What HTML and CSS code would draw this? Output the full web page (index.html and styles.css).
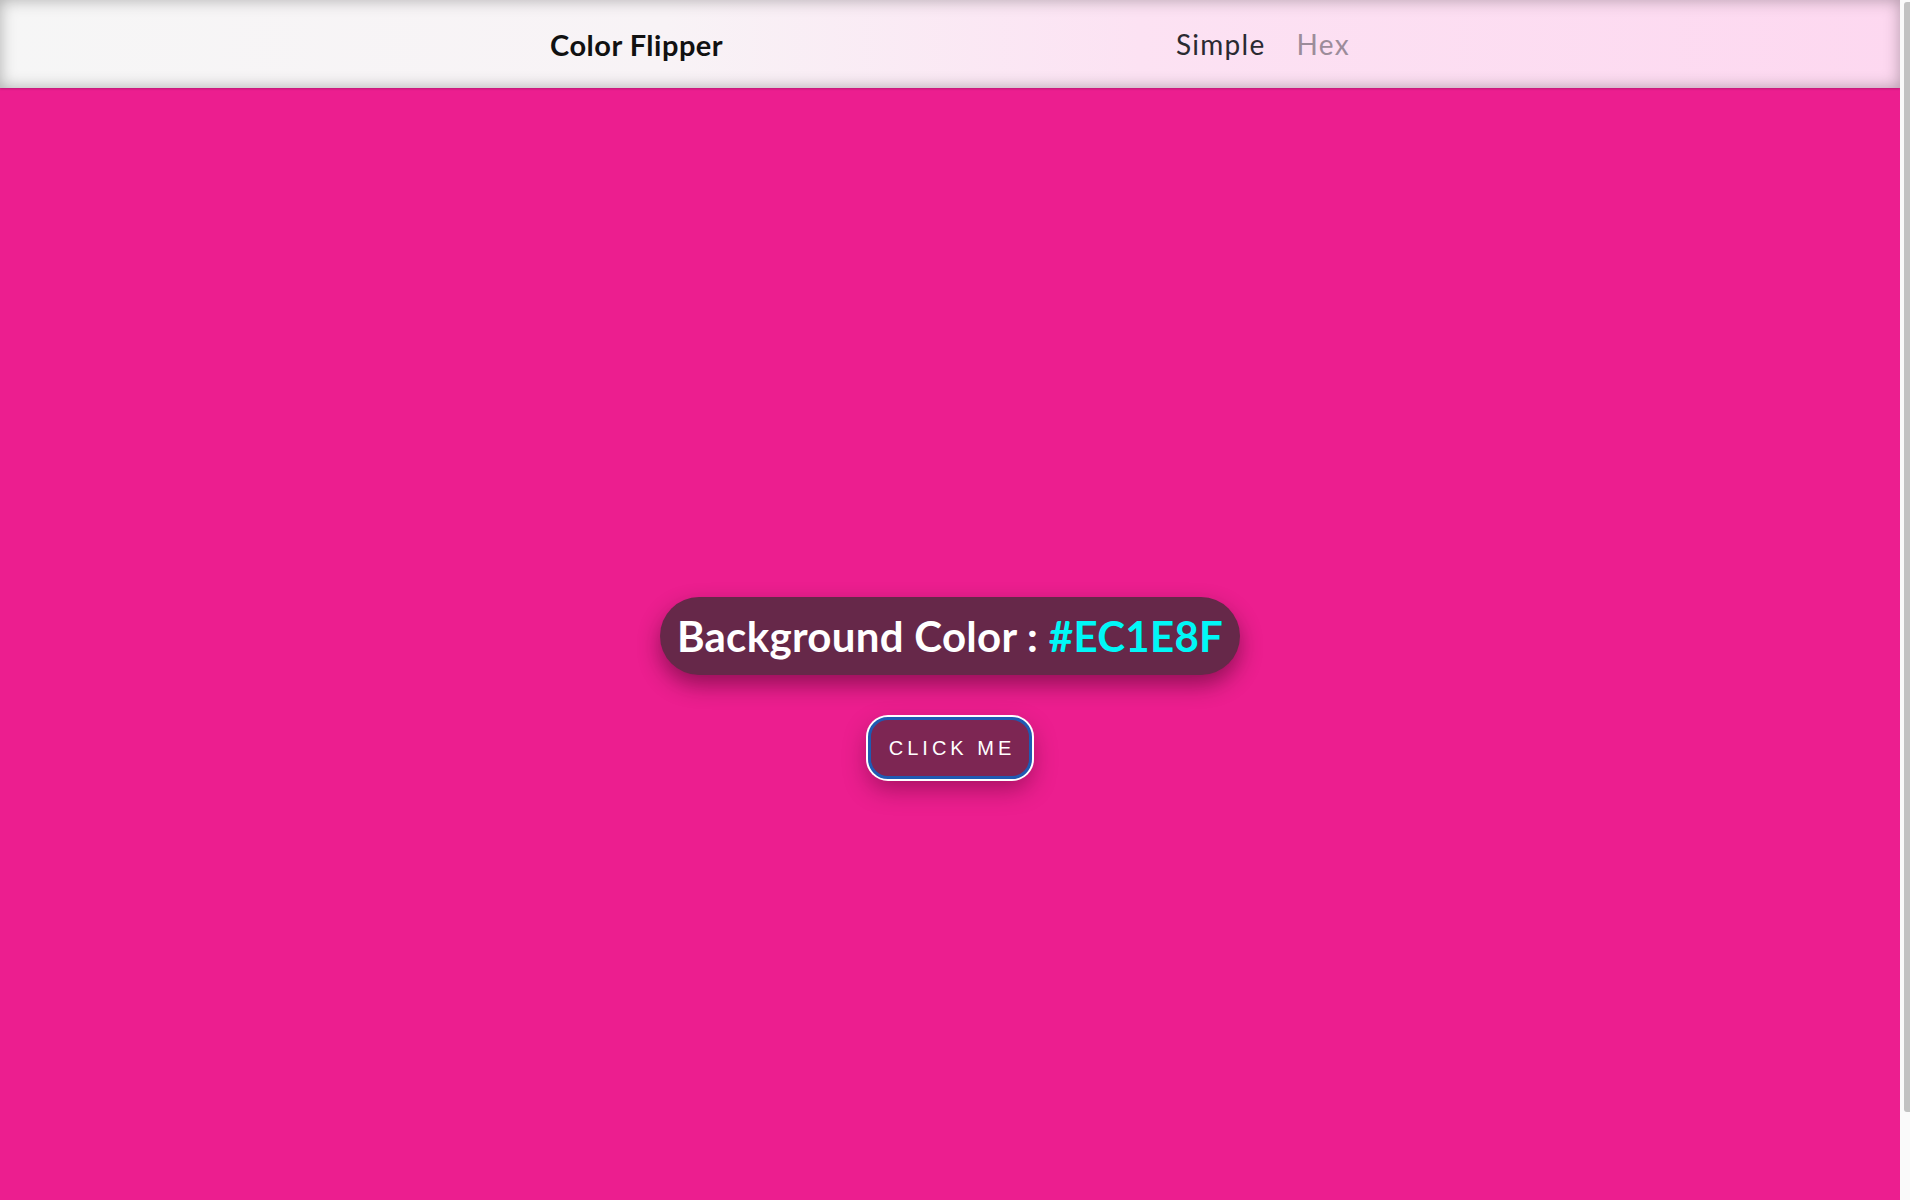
FILE: index.html
```html
<!DOCTYPE html>
<html lang="en">
<head>
<meta charset="utf-8">
<title>Color Flipper</title>
<link rel="stylesheet" href="styles.css">
</head>
<body>
<div class="window">
  <div class="page">
    <nav class="navbar">
      <div class="nav-center">
        <h4 class="brand">Color Flipper</h4>
        <ul class="nav-links">
          <li><a href="#" class="link active">Simple</a></li>
          <li><a href="#" class="link muted">Hex</a></li>
        </ul>
      </div>
    </nav>
    <main class="main">
      <div class="container">
        <h2 class="color-label">Background Color : <span class="color-value">#EC1E8F</span></h2>
        <button class="btn">click me</button>
      </div>
    </main>
  </div>
  <div class="scrollbar"><div class="thumb"></div></div>
</div>
</body>
</html>
```

FILE: styles.css
```css
html, body {
  margin: 0;
  padding: 0;
  height: 100%;
  overflow: hidden;
}

body {
  font-family: Lato, "Open Sans", sans-serif;
  background: #ec1e8f;
}

.window {
  display: flex;
  height: 1200px;
}

.page {
  flex: 1;
  display: flex;
  flex-direction: column;
  background: #ec1e8f;
  overflow: hidden;
}

.navbar {
  flex: 0 0 88px;
  height: 88px;
  display: flex;
  align-items: center;
  background: linear-gradient(to right, #f6f6f6 0%, #f8f3f6 35%, #fce2f3 60%, #fdd8f0 100%);
  box-shadow: inset 0 0 16px rgba(0, 0, 0, 0.3), 0 1px 2px rgba(120, 20, 80, 0.4);
  position: relative;
  z-index: 1;
}

.nav-center {
  width: 800px;
  margin: 0 auto;
  display: flex;
  align-items: center;
  justify-content: space-between;
}

.brand {
  margin: 0;
  font-size: 29px;
  font-weight: 700;
  color: #111;
  letter-spacing: 0.5px;
}

.nav-links {
  list-style: none;
  margin: 0;
  padding: 0;
  display: flex;
  gap: 31px;
}

.link {
  text-decoration: none;
  font-size: 28px;
  font-weight: 400;
  letter-spacing: 1.3px;
}

.link.active {
  color: #2a2a31;
}

.link.muted {
  color: #9c8c9a;
}

.main {
  flex: 0 0 1200px;
  height: 1200px;
  display: flex;
  align-items: center;
  justify-content: center;
}

.container {
  display: flex;
  flex-direction: column;
  align-items: center;
}

.color-label {
  margin: 0;
  padding: 14px 17px;
  line-height: 50px;
  font-size: 42px;
  font-weight: 700;
  color: #fff;
  background: #662849;
  border-radius: 39px;
  box-shadow: 0 10px 22px rgba(40, 0, 20, 0.45);
  letter-spacing: 0.3px;
}

.color-value {
  color: #00f7f7;
}

.btn {
  margin-top: 42px;
  width: 164px;
  height: 62px;
  padding: 0 0 0 4px;
  font-family: "Liberation Sans", Arial, sans-serif;
  font-size: 20px;
  letter-spacing: 4px;
  text-transform: uppercase;
  color: #fff;
  background: #7d2653;
  border: 3px solid #1f5ab2;
  border-radius: 20px;
  box-shadow: 0 0 0 2px #ffffff, 0 10px 24px rgba(60, 0, 30, 0.4);
  cursor: pointer;
}

.scrollbar {
  flex: 0 0 10px;
  width: 10px;
  background: #fafafa;
  display: flex;
  flex-direction: column;
}

.thumb {
  margin: 2px 0 0 4px;
  width: 6px;
  height: 1110px;
  background: #c2c2c2;
  border-radius: 3px 0 0 3px;
}
```
